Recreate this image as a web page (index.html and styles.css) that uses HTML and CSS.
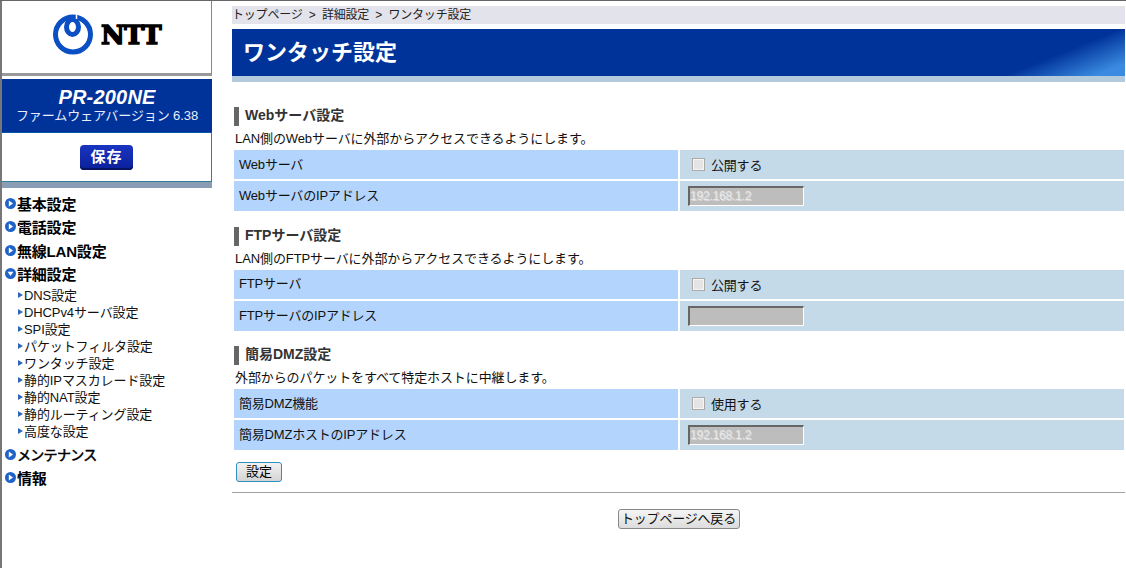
FILE: index.html
```html
<!DOCTYPE html>
<html lang="ja">
<head>
<meta charset="utf-8">
<title>ワンタッチ設定</title>
<link rel="stylesheet" href="styles.css">
</head>
<body>
<div class="page">
  <aside class="side">
    <div class="logo">
      <svg class="logo-mark" width="41" height="41" viewBox="0 0 41 41"><circle cx="20" cy="20.5" r="17.5" fill="none" stroke="#0a4fc4" stroke-width="5"/><ellipse cx="19.5" cy="13" rx="6" ry="7.5" fill="none" stroke="#0a4fc4" stroke-width="5"/><path d="M23.5 0 V5" stroke="#fff" stroke-width="1.5"/></svg>
      <span class="logo-text">NTT</span>
    </div>
    <div class="model">
      <div class="model-name">PR-200NE</div>
      <div class="model-ver">ファームウェアバージョン&nbsp;6.38</div>
    </div>
    <div class="save-box"><span class="save">保存</span></div>
    <nav class="nav">
      <div class="nav-top"><svg class="dot" width="11" height="11" viewBox="0 0 11 11"><circle cx="5.5" cy="5.5" r="5.5" fill="#1f63c8"/><path d="M3.8 2.6 L8 5.5 L3.8 8.4Z" fill="#fff"/></svg>基本設定</div>
      <div class="nav-top"><svg class="dot" width="11" height="11" viewBox="0 0 11 11"><circle cx="5.5" cy="5.5" r="5.5" fill="#1f63c8"/><path d="M3.8 2.6 L8 5.5 L3.8 8.4Z" fill="#fff"/></svg>電話設定</div>
      <div class="nav-top"><svg class="dot" width="11" height="11" viewBox="0 0 11 11"><circle cx="5.5" cy="5.5" r="5.5" fill="#1f63c8"/><path d="M3.8 2.6 L8 5.5 L3.8 8.4Z" fill="#fff"/></svg>無線LAN設定</div>
      <div class="nav-top"><svg class="dot" width="11" height="11" viewBox="0 0 11 11"><circle cx="5.5" cy="5.5" r="5.5" fill="#1f63c8"/><path d="M2.6 3.8 L8.4 3.8 L5.5 8Z" fill="#fff"/></svg>詳細設定</div>
      <ul class="sub">
        <li>DNS設定</li>
        <li>DHCPv4サーバ設定</li>
        <li>SPI設定</li>
        <li>パケットフィルタ設定</li>
        <li>ワンタッチ設定</li>
        <li>静的IPマスカレード設定</li>
        <li>静的NAT設定</li>
        <li>静的ルーティング設定</li>
        <li>高度な設定</li>
      </ul>
      <div class="nav-top"><svg class="dot" width="11" height="11" viewBox="0 0 11 11"><circle cx="5.5" cy="5.5" r="5.5" fill="#1f63c8"/><path d="M3.8 2.6 L8 5.5 L3.8 8.4Z" fill="#fff"/></svg><span class="kana">メンテナンス</span></div>
      <div class="nav-top"><svg class="dot" width="11" height="11" viewBox="0 0 11 11"><circle cx="5.5" cy="5.5" r="5.5" fill="#1f63c8"/><path d="M3.8 2.6 L8 5.5 L3.8 8.4Z" fill="#fff"/></svg>情報</div>
    </nav>
  </aside>
  <main class="main">
    <div class="crumb">トップページ &nbsp;&gt;&nbsp; 詳細設定 &nbsp;&gt;&nbsp; ワンタッチ設定</div>
    <h1 class="title">ワンタッチ設定</h1>
    <section class="sec">
      <h2 class="sec-h">Webサーバ設定</h2>
      <p class="desc">LAN側のWebサーバに外部からアクセスできるようにします。</p>
      <div class="row"><div class="k">Webサーバ</div><div class="v"><span class="cb"></span>公開する</div></div>
      <div class="row"><div class="k">WebサーバのIPアドレス</div><div class="v"><span class="inp">192.168.1.2</span></div></div>
    </section>
    <section class="sec">
      <h2 class="sec-h">FTPサーバ設定</h2>
      <p class="desc">LAN側のFTPサーバに外部からアクセスできるようにします。</p>
      <div class="row"><div class="k">FTPサーバ</div><div class="v"><span class="cb"></span>公開する</div></div>
      <div class="row"><div class="k">FTPサーバのIPアドレス</div><div class="v"><span class="inp"></span></div></div>
    </section>
    <section class="sec">
      <h2 class="sec-h">簡易DMZ設定</h2>
      <p class="desc">外部からのパケットをすべて特定ホストに中継します。</p>
      <div class="row"><div class="k">簡易DMZ機能</div><div class="v"><span class="cb"></span>使用する</div></div>
      <div class="row"><div class="k">簡易DMZホストのIPアドレス</div><div class="v"><span class="inp">192.168.1.2</span></div></div>
    </section>
    <div class="act"><button class="set" type="button">設定</button></div>
    <div class="back-row"><button class="back" type="button">トップページへ戻る</button></div>
  </main>
</div>
</body>
</html>
```
FILE: styles.css
```css
* { box-sizing: border-box; }
html, body { margin: 0; padding: 0; background: #fff; }
body {
  width: 1126px;
  height: 568px;
  overflow: hidden;
  font-family: "Liberation Sans", "Noto Sans CJK JP", sans-serif;
  font-size: 13px;
  color: #111;
  border-top: 1px solid #666;
}
.page { display: flex; height: 567px; }
.side {
  width: 212px;
  flex: none;
  border-left: 2px solid #777;
}
.logo {
  height: 75px;
  border-bottom: 3px solid #999;
  border-right: 1px solid #888;
  display: flex;
  align-items: center;
  justify-content: center;
  gap: 7px;
  padding: 0 0 5px 1px;
}
.logo-text {
  font-family: "DejaVu Serif", serif;
  font-weight: 700;
  font-size: 26px;
  line-height: 1;
  color: #000;
  -webkit-text-stroke: 1.5px #000;
  letter-spacing: -0.5px;
}
.model {
  margin-top: 3px;
  height: 53px;
  background: #003399;
  color: #fff;
  text-align: center;
  padding-top: 8px;
}
.model-name {
  font-style: italic;
  font-weight: 700;
  font-size: 20px;
  line-height: 20px;
  letter-spacing: 0.2px;
}
.model-ver { font-size: 13px; line-height: 17px; color: #e8eeff; letter-spacing: -0.1px; }
.save-box {
  height: 50px;
  border: 1px solid #2f7f96;
  border-top-color: #0a55a8;
  border-left: 0;
  display: flex;
  justify-content: center;
  align-items: center;
}
.save {
  width: 53px;
  height: 25px;
  border-radius: 4px;
  background: linear-gradient(#1a35c0, #0a1f9a);
  box-shadow: inset 0 -2px 0 #06135f;
  color: #fff;
  font-weight: 700;
  font-size: 15px;
  line-height: 24px;
  letter-spacing: 1px;
  text-align: center;
}
.nav {
  border-top: 6px solid #8a9db5;
  padding: 6px 0 0 3px;
}
.nav-top {
  display: flex;
  align-items: center;
  gap: 1px;
  height: 18px;
  margin-bottom: 5.5px;
  font-size: 15px;
  font-weight: 700;
  letter-spacing: -0.2px;
  color: #000;
}
.kana { font-size: 14px; font-weight: 400; -webkit-text-stroke: 0.5px #000; letter-spacing: -0.7px; }
.dot { flex: none; }
.sub {
  list-style: none;
  margin: -1px 0 5px;
  padding: 0 0 0 13px;
}
.sub li {
  position: relative;
  padding-left: 6px;
  height: 17px;
  line-height: 17px;
  font-size: 13px;
  letter-spacing: -0.1px;
  color: #111;
}
.sub li::before {
  content: "";
  position: absolute;
  left: 0;
  top: 5px;
  border-left: 5px solid #2f68b8;
  border-top: 3px solid transparent;
  border-bottom: 3px solid transparent;
}
.main { flex: 1; min-width: 0; padding: 5px 1px 0 20px; }
.crumb {
  height: 18px;
  background: #e3e3ec;
  font-size: 12px;
  line-height: 18px;
  letter-spacing: -0.2px;
  color: #222;
  margin-bottom: 5px;
}
.title {
  margin: 0 0 25px;
  height: 53px;
  padding-left: 11px;
  font-size: 22px;
  line-height: 47px;
  font-weight: 700;
  color: #fff;
  border-bottom: 6px solid #b3c9dc;
  background:
    linear-gradient(158deg, rgba(61,143,228,0) 88%, rgba(61,143,228,.95) 97%) no-repeat,
    #003399;
  background-clip: padding-box;
  background-size: 100% 47px;
}
.sec { height: 119.5px; padding-left: 2px; }
.sec-h {
  margin: 0;
  height: 19px;
  font-size: 14px;
  line-height: 17px;
  font-weight: 700;
  color: #333;
  border-left: 5px solid #666;
  padding-left: 6px;
}
.desc {
  margin: 3px 0 2px 1px;
  height: 19px;
  line-height: 19px;
  font-size: 13px;
  letter-spacing: -0.1px;
}
.row {
  display: grid;
  grid-template-columns: 444px 444px;
  column-gap: 2px;
  height: 29px;
  margin-bottom: 2px;
  font-size: 13px;
  letter-spacing: -0.2px;
}
.row + .row { height: 30px; }
.k, .v { display: flex; align-items: center; }
.k { background: #b3d4fc; padding: 0 0 3px 5px; }
.v { background: #c5dae8; padding-left: 8px; }
.cb {
  width: 13px;
  height: 13px;
  margin: 0 6px 0 4px;
  background: #e4e4e4;
  border: 1px solid #aaa;
  box-shadow: inset 0 0 0 1px #f5f5f5;
}
.inp {
  width: 116px;
  height: 20px;
  background: #bdbdbd;
  border: 1px solid #fff;
  border-top: 2px solid #666;
  border-left: 2px solid #666;
  color: #e8e8e8;
  font-size: 12px;
  line-height: 17px;
  text-shadow: 1px 1px 0 #d8d8d8;
}
.act {
  margin-top: -3.5px;
  height: 31px;
  border-bottom: 1px solid #a0a0a0;
  padding-left: 4px;
}
.set {
  display: block;
  width: 46px;
  height: 20px;
  padding: 0;
  border: 1px solid #2f8fc0;
  border-radius: 3px;
  background: linear-gradient(#f2f2f2, #d4d4d4);
  font: 13px/18px "Liberation Sans", "Noto Sans CJK JP", sans-serif;
  color: #000;
}
.back-row { display: flex; justify-content: center; padding: 16px 0 0 0; }
.back {
  width: 122px;
  height: 20px;
  padding: 0;
  border: 1px solid #888;
  border-radius: 3px;
  background: linear-gradient(#f5f5f5, #dcdcdc);
  font: 13px/18px "Liberation Sans", "Noto Sans CJK JP", sans-serif;
  letter-spacing: -0.2px;
  color: #111;
}
```
